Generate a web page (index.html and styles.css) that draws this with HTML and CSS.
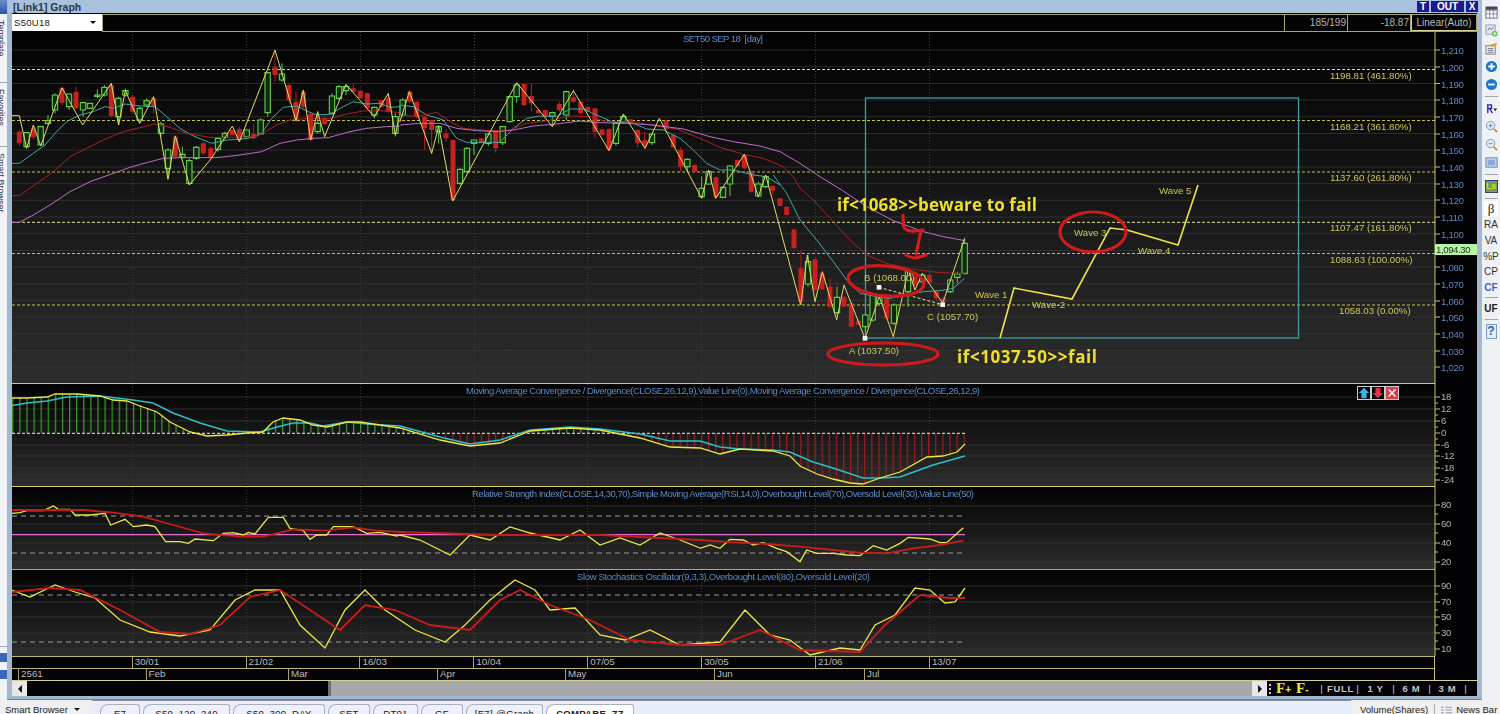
FILE: index.html
```html
<!DOCTYPE html>
<html lang="en">
<head>
<meta charset="utf-8">
<title>[Link1] Graph</title>
<link rel="stylesheet" href="styles.css">
</head>
<body>
<div class="app">
  <div class="desk">
    <aside class="leftbar">
      <div class="lefticon"></div>
      <div class="leftsec leftsec-a"><span class="vtext">Template</span></div>
      <div class="leftsec leftsec-b"><span class="vtext">Favorites</span></div>
      <div class="leftsec leftsec-c"><span class="vtext">Smart Browser</span></div>
      <div class="leftsec leftsec-d"><div class="lefticon small"></div><div class="lefticon small"></div></div>
    </aside>

    <main class="window">
      <header class="titlebar">
        <span class="wintitle">[Link1] Graph</span>
        <div class="winbtns"><span class="winbtn">T</span><span class="winbtn wide">OUT</span><span class="winbtn">X</span></div>
      </header>
      <div class="toolbar">
        <div class="combo"><span>S50U18</span><span class="caret"></span></div>
        <div class="infobox">
          <div class="cell grow"></div>
          <div class="cell num">185/199</div>
          <div class="cell num">-18.87</div>
          <div class="cell scale">Linear(Auto)</div>
        </div>
      </div>

      <svg class="panel main-panel" viewBox="12 32 1465 352" aria-label="Price chart">
        <defs>
          <linearGradient id="bg" x1="0" y1="0" x2="0" y2="1"><stop offset="0" stop-color="#020202"/><stop offset="1" stop-color="#2d2d2d"/></linearGradient>
          <pattern id="gbars" x="19.3" y="0" width="7.1" height="10" patternUnits="userSpaceOnUse"><rect width="1.2" height="10" fill="#3f9a30"/></pattern>
          <pattern id="rbars" x="19.3" y="0" width="7.1" height="10" patternUnits="userSpaceOnUse"><rect width="1.2" height="10" fill="#a01c1c"/></pattern>
        </defs>
        <rect class="plotbg" x="12" y="32" width="1423" height="352" fill="url(#bg)"/>
        <path class="grid" d="M12 50H1435M12 66.7H1435M12 83.4H1435M12 100H1435M12 116.8H1435M12 133.5H1435M12 150H1435M12 167H1435M12 183.7H1435M12 200.3H1435M12 217H1435M12 233.7H1435M12 250.4H1435M12 267H1435M12 283.8H1435M12 300.5H1435M12 317H1435M12 333.9H1435M12 350.5H1435M12 367H1435"/>
        <path class="vgrid" d="M132.7 32V384M246.7 32V384M360.7 32V384M474.5 32V384M587.5 32V384M701.5 32V384M815.5 32V384M929.5 32V384"/>
        <path class="fib pale" d="M12 69.5H1435M12 222.3H1435"/>
        <path class="fib" d="M12 120.5H1435M12 172H1435M12 253.5H1435M12 305H1435"/>
        <rect class="tealbox" x="865.5" y="98" width="433" height="240"/>

        <g transform="translate(0 50) scale(.33333)">
          <path class="wick-g" d="M144 195V225M165 130V190M207 130V180M249 155V200M292 118V145M313 105V140M355 140V225M376 115V140M419 170V220M440 145V170M483 215V260M504 295V385M547 290V325M568 325V405M589 288V330M654 262V305M675 245V268M782 205V255M803 65V200M846 40V95M953 185V250M996 130V195M1017 105V150M1038 105V135M1123 170V205M1186 190V260"/>
          <path class="wick-r" d="M58 240V288M100 225V270M186 113V165M228 110V178M334 100V203M398 135V190M461 140V190M526 255V325M610 275V315M632 290V330M718 232V275M761 222V268M825 0V95M867 100V158M888 125V215M910 120V175M932 190V272M974 200V225M1060 102V128M1102 128V180M1165 130V188"/>
          <path class="up" d="M72 248h16V290h-16zM114 230h16V285h-16zM136 212h16V220h-16zM157 135h16V180h-16zM199 132h16V170h-16zM241 158h16V180h-16zM262 160h16V175h-16zM284 135h16V139h-16zM305 112h16V135h-16zM347 145h16V200h-16zM368 122h16V135h-16zM411 175h16V210h-16zM432 152h16V165h-16zM475 222h16V250h-16zM496 300h16V355h-16zM539 313h16V322h-16zM560 332h16V400h-16zM581 292h16V325h-16zM646 265h16V298h-16zM667 250h16V262h-16zM732 240h16V260h-16zM774 210h16V252h-16zM795 68h16V188h-16zM838 72h16V90h-16zM945 220h16V245h-16zM988 138h16V190h-16zM1009 110h16V145h-16zM1030 110h16V122h-16zM1115 172h16V195h-16zM1178 200h16V250h-16z"/>
          <path class="down" d="M58 245V280M100 235V262M186 115V158M228 125V175M334 105V198M398 140V185M461 145V170M526 260V320M610 280V310M632 295V325M697 240V255M718 238V270M761 252V265M825 52V75M867 105V150M888 155V210M910 125V170M932 192V270M974 205V222M1060 115V125M1081 122V145M1102 130V175M1144 150V170M1165 145V185"/>
          <path class="ma cyan" d="M36 340L58 340 100 310 135 285 165 250 200 215 240 195 280 185 315 170 340 175 375 162 420 168 465 170 500 200 540 235 580 258 635 280 680 270 720 268 760 262 785 250 815 205 850 172 890 168 925 185 950 195 990 193 1030 170 1060 155 1100 162 1140 160 1170 172 1200 170"/>
          <path class="ma red" d="M36 437L58 437 110 400 160 365 210 320 260 295 310 270 370 245 420 233 465 222 510 232 560 250 630 262 700 262 770 260 830 225 870 210 930 205 990 205 1040 192 1090 183 1140 182 1200 188"/>
          <path class="ma purple" d="M36 517L58 517 100 495 150 465 210 425 270 395 340 370 390 352 440 338 490 325 540 323 600 323 660 322 720 315 785 305 840 280 890 270 940 265 985 263 1050 245 1100 235 1160 230 1200 228"/>
          <path class="zig" d="M36 197L58 197 80 295 100 225 122 288 186 113 248 225 334 100 356 225 376 122 419 220 461 140 504 388 526 258 568 405 632 328 697 228 718 275 825 0 888 212 910 120 932 270 953 185 974 260 1038 103 1123 200 1165 130 1186 255 1200 190"/>
        </g>

        <g transform="translate(400 60) scale(.33333)">
          <path class="wick-g" d="M8 115V170M116 195V250M180 325V375M201 262V340M222 238V285M265 218V258M308 198V255M329 108V188M350 70V128M457 155V198M499 92V180M648 188V258M670 165V190M756 220V255M862 295V335M905 350V415M926 330V375M969 380V415M990 315V408M1075 365V412M1097 345V385"/>
          <path class="wick-r" d="M30 92V130M50 125V175M74 168V270M95 180V282M138 208V245M159 238V425M287 210V278M372 72V137M394 72V155M436 150V172M478 125V155M520 88V128M542 120V165M585 145V235M627 205V272M713 208V262M734 215V265M798 178V210M820 222V265M842 262V335M884 312V338M948 350V415M1012 298V320M1033 282V328M1054 332V398M1118 376V405"/>
          <path class="up" d="M0 120h16V165h-16zM108 200h16V215h-16zM172 328h16V370h-16zM193 265h16V335h-16zM214 240h16V250h-16zM257 222h16V250h-16zM300 200h16V248h-16zM321 110h16V185h-16zM342 75h16V110h-16zM449 158h16V168h-16zM491 95h16V165h-16zM640 190h16V250h-16zM662 170h16V185h-16zM748 222h16V248h-16zM854 298h16V320h-16zM897 385h16V410h-16zM918 335h16V372h-16zM961 382h16V412h-16zM982 318h16V372h-16zM1067 372h16V408h-16zM1089 350h16V380h-16z"/>
          <path class="down" d="M30 95V125M50 125V170M74 170V205M95 180V210M138 222V235M159 240V420M244 235V250M287 212V265M372 72V135M394 108V130M415 150V160M436 150V170M478 132V150M520 112V125M542 125V160M563 140V155M585 145V215M606 208V225M627 208V268M692 178V188M713 210V250M734 240V258M798 182V208M820 225V262M842 270V320M884 315V335M948 352V412M1012 300V318M1033 285V325M1054 335V395M1118 378V392"/>
          <path class="ma cyan" d="M0 170L0 135 40 140 80 165 130 180 170 235 200 247 260 247 300 247 340 205 380 175 420 168 470 170 510 147 550 147 590 165 640 187 700 190 740 207 790 210 840 235 880 270 920 310 960 330 1000 330 1060 345 1100 350 1140 375"/>
          <path class="ma red" d="M0 188L0 165 50 170 110 157 150 185 190 205 270 212 330 210 380 190 440 182 520 168 570 170 620 185 700 185 750 195 830 207 900 235 960 262 1030 283 1090 295 1150 320 1180 350 1200 385"/>
          <path class="ma purple" d="M0 195L60 190 120 190 170 205 230 212 290 215 340 210 400 198 470 192 540 183 600 188 680 190 760 195 850 207 930 230 1000 245 1080 258 1140 275 1200 310"/>
          <path class="zig" d="M0 185L28 95 95 280 116 200 158 423 350 68 457 200 520 92 627 272 670 162 735 265 778 175 905 415 926 330 947 415 1033 283 1075 410 1097 345"/>
        </g>

        <g transform="translate(780 190) scale(.33333)">
          <path class="wick-g" d="M84 195V290M171 290V375M256 370V425M278 310V395M298 315V345M342 340V405M384 235V350M427 250V280M511 265V310M532 245V280M554 145V255"/>
          <path class="wick-r" d="M63 180V340M105 205V305M126 248V300M150 265V355M214 335V412M320 315V390M405 255V290M448 250V282M469 300V330M490 320V340"/>
          <path class="up" d="M76 215h16V282h-16zM163 322h16V368h-16zM248 375h16V410h-16zM270 315h16V390h-16zM290 320h16V340h-16zM334 345h16V400h-16zM376 245h16V305h-16zM419 255h16V275h-16zM503 270h16V305h-16zM524 252h16V262h-16zM546 160h16V250h-16z"/>
          <path class="down" d="M0 25V48M20 50V75M42 118V175M63 235V335M105 208V300M126 250V298M150 290V350M192 320V350M214 340V410M235 392V405M320 320V385M362 310V320M405 260V285M448 255V278M469 305V325M490 325V335"/>
          <path class="ma cyan" d="M-20 -45L20 10 60 90 110 150 160 215 200 270 240 310 280 318 330 325 380 315 430 305 480 302 520 295 553 265"/>
          <path class="ma red" d="M60 -6L100 30 150 85 210 150 260 195 320 220 400 238 480 248 555 250"/>
          <path class="ma purple" d="M60 -80L120 -40 185 0 260 50 340 92 430 125 490 140 555 152"/>
          <path class="zig" d="M-43 -45L62 345 82 195 105 335 127 245 170 390 192 285 255 445 298 320 340 440 385 240 405 300 427 250 488 340 554 145"/>
          <path class="abline" d="M297 292L488 344"/>
          <rect class="pt" x="290" y="285" width="14" height="14"/>
          <rect class="pt" x="481" y="337" width="14" height="14"/>
          <rect class="pt" x="248" y="438" width="14" height="14"/>
        </g>

        <path class="wave" d="M1000 338L1014 288 1072 299 1110 228 1127 230 1178 245 1198 185"/>

        <ellipse class="ring" cx="883" cy="354" rx="55" ry="11"/>
        <ellipse class="ring" cx="886" cy="281" rx="38" ry="15" transform="rotate(5 886 281)"/>
        <ellipse class="ring" cx="1093" cy="232" rx="33" ry="20"/>
        <path class="scrawl" d="M903 215V225Q905 232 915 231L923 230M921 231L916 254M906 255Q912 258 916 258L926 255"/>

        <text class="ann" x="837" y="211" textLength="200">if&lt;1068&gt;&gt;beware to fail</text>
        <text class="ann" x="957" y="363" textLength="140">if&lt;1037.50&gt;&gt;fail</text>
        <text class="lbl" x="864" y="281">B (1068.00)</text>
        <text class="lbl" x="927" y="320">C (1057.70)</text>
        <text class="lbl" x="849" y="354">A (1037.50)</text>
        <text class="lbl" x="975" y="298">Wave 1</text>
        <text class="lbl" x="1032" y="308">Wave-2</text>
        <text class="lbl" x="1074" y="236">Wave 3</text>
        <text class="lbl" x="1138" y="254">Wave 4</text>
        <text class="lbl" x="1159" y="194">Wave 5</text>
        <text class="lbl" x="1330" y="79">1198.81 (461.80%)</text>
        <text class="lbl" x="1330" y="130">1168.21 (361.80%)</text>
        <text class="lbl" x="1330" y="181">1137.60 (261.80%)</text>
        <text class="lbl" x="1330" y="231">1107.47 (161.80%)</text>
        <text class="lbl" x="1330" y="263">1088.63 (100.00%)</text>
        <text class="lbl" x="1339" y="314">1058.03 (0.00%)</text>
        <text class="ptitle" x="683" y="42" textLength="80">SET50 SEP 18  [day]</text>

        <rect class="axisbg" x="1435" y="32" width="42" height="352"/>
        <path class="axis" d="M1435 32V384M1435 50H1440M1435 67H1440M1435 83.5H1440M1435 100H1440M1435 117H1440M1435 134H1440M1435 150H1440M1435 167H1440M1435 184H1440M1435 200H1440M1435 217H1440M1435 234H1440M1435 267H1440M1435 284H1440M1435 301H1440M1435 317H1440M1435 334H1440M1435 351H1440M1435 367H1440"/>
        <g class="ylab">
          <text x="1441" y="54">1,210</text><text x="1441" y="71">1,200</text><text x="1441" y="87.5">1,190</text><text x="1441" y="104">1,180</text><text x="1441" y="121">1,170</text><text x="1441" y="138">1,160</text><text x="1441" y="154">1,150</text><text x="1441" y="171">1,140</text><text x="1441" y="188">1,130</text><text x="1441" y="204">1,120</text><text x="1441" y="221">1,110</text><text x="1441" y="238">1,100</text><text x="1441" y="271">1,080</text><text x="1441" y="288">1,070</text><text x="1441" y="305">1,060</text><text x="1441" y="321">1,050</text><text x="1441" y="338">1,040</text><text x="1441" y="355">1,030</text><text x="1441" y="371">1,020</text>
        </g>
        <rect class="pricetag" x="1435" y="244" width="42" height="11"/>
        <text class="pricetxt" x="1436" y="253">1,094.30</text>
        <path class="sep" d="M12 383.500H1435"/>
      </svg>

      <div class="macdwrap">
        <svg class="panel macd-panel" viewBox="12 384 1465 103" aria-label="MACD">
          <rect class="plotbg" x="12" y="384" width="1423" height="103" fill="url(#bg)"/>
          <path class="grid" d="M12 397H1435M12 409H1435M12 421H1435M12 445H1435M12 456H1435M12 468H1435M12 480H1435"/>
          <path class="vgrid" d="M132.7 384V487M246.7 384V487M360.7 384V487M474.5 384V487M587.5 384V487M701.5 384V487M815.5 384V487M929.5 384V487"/>
          <path fill="url(#gbars)" d="M12 433V398L27 398 47 397 55 394 77 394 100 396 127 401 140 405 157 411 170 422 190 431 207 433 260 433 273 422 283 418 300 420 313 425 327 427 347 422 360 422 380 425 400 428 440 433ZM525 433L530 431 570 428 600 430 620 433Z"/>
          <path fill="url(#rbars)" d="M445 433V441L470 446 500 443 525 433ZM620 433L640 438 670 447 700 448 720 454 740 449 773 451 790 455 800 466 817 474 833 479 850 483 863 484 880 478 900 472 927 457 943 456 957 452 965 444V433Z"/>
          <path class="zero" d="M12 433.300H965"/>
          <path class="ind cyan2" d="M12 405.500L27 403 47 401 67 397 100 396 133 400 153 403 173 413 200 423 227 431 260 432 277 427 293 423 310 423 323 426 347 422 367 424 400 426 440 437 470 444 500 440 530 430 570 427 600 429 640 434 670 441 700 441 720 447 740 449 773 450 790 452 813 462 833 468 863 478 880 478 900 477 933 465 965 456"/>
          <path class="ind yel" d="M12 398L27 398 47 397 55 394 77 394 100 396 113 400 127 401 140 406 157 412 170 422 190 432 207 436 227 435 247 433 263 432 273 422 283 418 300 420 313 425 327 427 347 422 360 422 380 425 400 428 440 440 470 446 500 443 530 431 570 428 600 430 640 438 670 447 700 448 720 454 740 449 773 451 790 456 800 466 817 474 833 479 850 483 863 484 880 478 900 472 927 457 943 456 957 452 965 444"/>
          <text class="ptitle" x="466" y="394" textLength="514">Moving Average Convergence / Divergence(CLOSE,26,12,9),Value Line(0),Moving Average Convergence / Divergence(CLOSE,26,12,9)</text>
          <rect class="axisbg" x="1435" y="384" width="42" height="103"/>
          <path class="axis" d="M1435 384V487M1435 397H1440M1435 403H1438M1435 409H1440M1435 415H1438M1435 421H1440M1435 427H1438M1435 433H1440M1435 439H1438M1435 445H1440M1435 451H1438M1435 456H1440M1435 462H1438M1435 468H1440M1435 474H1438M1435 480H1440"/>
          <g class="ylab grey">
            <text x="1441" y="400">18</text><text x="1441" y="412">12</text><text x="1441" y="424">6</text><text x="1441" y="436">0</text><text x="1441" y="448">-6</text><text x="1441" y="459">-12</text><text x="1441" y="471">-18</text><text x="1441" y="483">-24</text>
          </g>
          <path class="sep" d="M12 486.500H1435"/>
        </svg>
        <div class="panelbtns">
          <span class="pbtn"><svg viewBox="0 0 14 14"><path fill="#38b4e8" d="M7 1L13 7H10V13H4V7H1Z"/></svg></span>
          <span class="pbtn"><svg viewBox="0 0 14 14"><path fill="#e0304a" d="M7 13L13 7H10V1H4V7H1Z"/></svg></span>
          <span class="pbtn closebtn"><svg viewBox="0 0 14 14"><path stroke="#fff" stroke-width="1.6" d="M3 3L11 11M11 3L3 11"/></svg></span>
        </div>
      </div>

      <svg class="panel rsi-panel" viewBox="12 487 1465 83" aria-label="RSI">
        <rect class="plotbg" x="12" y="487" width="1423" height="83" fill="url(#bg)"/>
        <path class="grid" d="M12 506H1435M12 524H1435M12 543H1435M12 562H1435"/>
        <path class="vgrid" d="M132.7 487V570M246.7 487V570M360.7 487V570M474.5 487V570M587.5 487V570M701.5 487V570M815.5 487V570M929.5 487V570"/>
        <path class="dash" d="M12 516H965M12 553H965"/>
        <path class="pinkline" d="M12 534.700H965"/>
        <g transform="translate(0 380) scale(.33333)">
          <path class="ind yel" d="M36 400L60 398 80 392 130 392 160 378 175 388 210 388 225 405 270 405 315 400 332 435 375 418 400 440 440 435 465 440 497 485 540 485 565 490 585 477 640 482 670 460 700 458 730 465 745 457 765 462 805 412 850 412 870 445 910 452 930 478 950 465 980 465 1000 440 1060 440 1100 460 1140 457 1190 468 1200 465"/>
          <path class="ind redl" d="M36 390L250 390 340 398 430 410 520 435 610 460 720 470 790 470 880 448 980 452 1060 442 1130 452 1200 456"/>
        </g>
        <path class="ind yel" d="M400 535L420 540 450 555 470 535 490 540 510 527 530 533 560 540 580 530 600 545 620 538 640 545 660 533 680 540 700 548"/>
        <path class="ind redl" d="M400 532L500 535 600 535 700 540"/>
        <g transform="translate(700 380) scale(.33333)">
          <path class="ind yel" d="M0 505L30 495 60 505 90 478 130 480 160 495 190 488 230 505 260 515 300 545 320 510 350 520 400 520 440 525 480 527 520 497 560 510 600 490 625 472 690 477 720 488 740 488 790 443"/>
          <path class="ind redl" d="M0 480L100 487 200 492 300 500 400 510 480 518 560 520 640 505 720 495 790 482"/>
        </g>
        <text class="ptitle" x="472" y="497" textLength="502">Relative Strength Index(CLOSE,14,30,70),Simple Moving Average(RSI,14,0),Overbought Level(70),Oversold Level(30),Value Line(50)</text>
        <rect class="axisbg" x="1435" y="487" width="42" height="83"/>
        <path class="axis" d="M1435 487V570M1435 505H1440M1435 514H1438M1435 524H1440M1435 533H1438M1435 543H1440M1435 552H1438M1435 562H1440"/>
        <g class="ylab grey"><text x="1441" y="527">60</text><text x="1441" y="546">40</text><text x="1441" y="565">20</text><text x="1441" y="508">80</text></g>
        <path class="sep" d="M12 569.700H1435"/>
      </svg>

      <svg class="panel stoch-panel" viewBox="12 570 1465 86" aria-label="Stochastics">
        <rect class="plotbg" x="12" y="570" width="1423" height="86" fill="url(#bg)"/>
        <path class="grid" d="M12 586H1435M12 602H1435M12 617H1435M12 633H1435M12 649H1435"/>
        <path class="vgrid" d="M132.7 570V656M246.7 570V656M360.7 570V656M474.5 570V656M587.5 570V656M701.5 570V656M815.5 570V656M929.5 570V656"/>
        <path class="dash" d="M12 595H965M12 642H965"/>
        <path class="ind yel" d="M12 590L30 597 55 585 75 592 95 598 120 620 150 632 180 636 210 630 235 600 255 590 280 590 300 625 325 648 345 610 365 590 385 610 415 630 445 642 465 625 490 600 515 580 535 590 550 610 575 608 600 635 625 640 650 630 680 645 720 642 745 610 770 635 790 640 810 655 840 648 860 650 875 625 895 615 915 588 930 590 945 603 955 602 965 588"/>
        <path class="ind redl" d="M12 592L50 588 80 590 120 610 160 632 190 634 220 625 250 597 280 590 310 610 340 630 365 605 395 610 430 625 470 630 500 600 520 590 550 605 590 620 630 640 680 645 720 645 760 630 800 650 860 652 885 625 920 595 950 598 965 598"/>
        <text class="ptitle" x="577" y="580" textLength="293">Slow Stochastics Oscillator(9,3,3),Overbought Level(80),Oversold Level(20)</text>
        <rect class="axisbg" x="1435" y="570" width="42" height="86"/>
        <path class="axis" d="M1435 570V656M1435 586H1440M1435 594H1438M1435 602H1440M1435 610H1438M1435 617H1440M1435 625H1438M1435 633H1440M1435 641H1438M1435 649H1440"/>
        <g class="ylab grey"><text x="1441" y="589">90</text><text x="1441" y="605">70</text><text x="1441" y="620">50</text><text x="1441" y="636">30</text><text x="1441" y="652">10</text></g>
      </svg>

      <div class="xrow dates">
        <div class="xcell"></div><div class="xcell">30/01</div><div class="xcell">21/02</div><div class="xcell">16/03</div><div class="xcell">10/04</div><div class="xcell">07/05</div><div class="xcell">30/05</div><div class="xcell">21/06</div><div class="xcell">13/07</div>
      </div>
      <div class="xrow months">
        <div class="xcell"></div><div class="xcell">2561</div><div class="xcell">Feb</div><div class="xcell">Mar</div><div class="xcell">Apr</div><div class="xcell">May</div><div class="xcell">Jun</div><div class="xcell">Jul</div>
      </div>
      <div class="scrollrow">
        <span class="sbtn"><span class="tri-l"></span></span>
        <span class="strack"></span>
        <span class="sthumb"></span>
        <span class="sbtn"><span class="tri-r"></span></span>
        <div class="ranges">
          <span class="grip"></span>
          <span class="fbtn">F<sub>+</sub></span><span class="fbtn">F<sub>-</sub></span>
          <span class="bar">|</span><span class="rng">FULL</span><span class="bar">|</span><span class="rng">1 Y</span><span class="bar">|</span><span class="rng">6 M</span><span class="bar">|</span><span class="rng">3 M</span><span class="bar">|</span>
        </div>
      </div>
    </main>

    <aside class="rightbar">
      <svg class="rb-icon" viewBox="0 0 14 14"><rect x="1" y="1" width="12" height="12" fill="#fff" stroke="#667"/><path stroke="#889" d="M1 5H13M1 8.500H13M5 1V13M9 1V13"/><rect x="1" y="1" width="12" height="3" fill="#445"/></svg>
      <svg class="rb-icon" viewBox="0 0 14 14"><rect x="1" y="1" width="10" height="10" fill="#e4e8ee" stroke="#99a"/><path stroke="#668" fill="none" d="M3 7L5 4 7 6 9 3"/><circle cx="10.500" cy="10.500" r="3" fill="#5cb848"/><path stroke="#fff" d="M10.500 8.500V12.500M8.500 10.500H12.500"/></svg>
      <svg class="rb-icon" viewBox="0 0 14 14"><rect x="1" y="4" width="10" height="9" fill="#e8ecf2" stroke="#778"/><path stroke="#778" d="M3 7H9M3 9H9M3 11H9"/><path fill="#e0a020" d="M5 3L12 1 13 3 7 5Z"/></svg>
      <svg class="rb-icon round" viewBox="0 0 14 14"><circle cx="7" cy="7" r="6" fill="#1c78c8"/><path stroke="#fff" stroke-width="2" d="M3.500 7H10.500M7 3.500V10.500"/></svg>
      <svg class="rb-icon round" viewBox="0 0 14 14"><circle cx="7" cy="7" r="6" fill="#1c78c8"/><path stroke="#fff" stroke-width="2" d="M3.500 7H10.500"/></svg>
      <i class="rb-sep"></i>
      <svg class="rb-icon" viewBox="0 0 14 14"><path fill="none" stroke="#2222b0" stroke-width="1.400" d="M2 3H7V7H3M3 3V12M5 7L8 12"/><path fill="#223" d="M9 7H13L11 10Z"/></svg>
      <svg class="rb-icon" viewBox="0 0 14 14"><circle cx="6" cy="6" r="4.500" fill="#dfeaf5" stroke="#7c97b5"/><path stroke="#6d86a3" stroke-width="1" d="M4 6H8M6 4V8"/><path stroke="#c09050" stroke-width="2" d="M9.500 9.500L13 13"/></svg>
      <svg class="rb-icon" viewBox="0 0 14 14"><circle cx="6" cy="6" r="4.500" fill="#dfeaf5" stroke="#7c97b5"/><path stroke="#6d86a3" stroke-width="1" d="M4 6H8"/><path stroke="#c09050" stroke-width="2" d="M9.500 9.500L13 13"/></svg>
      <svg class="rb-icon" viewBox="0 0 14 14"><rect x="1" y="2" width="12" height="10" fill="#c8daf0" stroke="#5c7cb0"/><rect x="3" y="4" width="8" height="6" fill="#8aa8d8"/></svg>
      <i class="rb-sep"></i>
      <span class="rb-ls">Ls</span>
      <i class="rb-sep"></i>
      <span class="rb-beta">β</span>
      <span class="rb-t">RA</span><span class="rb-t">VA</span><span class="rb-t">%P</span><span class="rb-t">CP</span><span class="rb-t blue">CF</span>
      <i class="rb-sep tight"></i>
      <span class="rb-t bold">UF</span>
      <i class="rb-sep tight"></i>
      <span class="rb-help">?</span>
    </aside>
  </div>

  <footer class="tabsrow">
    <div class="smart"><span>Smart Browser</span><span class="caret"></span></div>
    <div class="tabs">
      <span class="tab t1">E7</span><span class="tab t2">S50_120_240</span><span class="tab t3">S50_300_DAY</span><span class="tab t4">SET</span><span class="tab t5">DT01</span><span class="tab t6">GF</span><span class="tab t7">[E7]-@Graph</span><span class="tab t8 active">COMPARE_ZZ</span>
    </div>
    <div class="status">
      <span class="stat">Volume(Shares)</span>
      <span class="stat news"><svg class="newsicon" viewBox="0 0 12 8"><path stroke="#8a94a4" d="M0 1H3M5 1H12M0 4H3M5 4H12M0 7H3M5 7H12"/></svg>News Bar</span>
    </div>
  </footer>
</div>
</body>
</html>
```
FILE: styles.css
```css
* { box-sizing: border-box; }
html, body { margin: 0; padding: 0; height: 100%; overflow: hidden; background: #f0f0f0; }
body { font-family: "Liberation Sans", Arial, sans-serif; }

.app { width: 1500px; height: 714px; display: flex; flex-direction: column; overflow: hidden; }
.desk { display: flex; height: 700px; flex: none; }

/* left strip */
.leftbar { width: 7px; flex: none; background: #f2f3f6; display: flex; flex-direction: column; overflow: hidden; }
.lefticon { width: 12px; height: 14px; margin-left: -5px; background: linear-gradient(#6c8fd0, #2c52a8); flex: none; }
.lefticon.small { height: 9px; margin-bottom: 8px; background: #3c68b8; }
.leftsec { border-bottom: 1px solid #9aa; overflow: hidden; flex: none; padding-top: 6px; }
.leftsec-a { height: 69px; }
.leftsec-b { height: 64px; }
.leftsec-c { height: 500px; }
.leftsec-d { border: 0; height: 40px; }
.vtext { display: block; writing-mode: vertical-rl; font-size: 9px; color: #335; margin-left: -4px; white-space: nowrap; }

/* window */
.window { width: 1475px; flex: none; background: #a4b8d0; padding: 0 5px 4px 5px; display: flex; flex-direction: column; border-bottom: 1px solid #70808f; }
.titlebar { height: 13px; flex: none; margin-left: -4px; margin-right: -4px; padding: 0 3px 0 5px; display: flex; align-items: center; justify-content: space-between; background: #a9c1dd; }
.wintitle { font-size: 10.5px; font-weight: bold; color: #2b3646; }
.winbtns { display: flex; gap: 2px; }
.winbtn { background: #1b1b8e; color: #fff; font-size: 10px; font-weight: bold; height: 11px; width: 12px; line-height: 11px; text-align: center; }
.winbtn.wide { width: 33px; }

.toolbar { height: 19px; flex: none; display: flex; background: #000; padding-top: 1px; }
.combo { width: 90px; height: 17px; background: #fff; display: flex; align-items: center; justify-content: space-between; padding: 0 6px 0 2px; font-size: 9.5px; color: #222; letter-spacing: .3px; }
.caret { width: 0; height: 0; border: 3px solid transparent; border-top: 3px solid #111; border-bottom: 0; }
.infobox { flex: 1; display: flex; height: 18px; background: #030303; border: 1px solid #a8a474; color: #b4b4b4; font-size: 10px; }
.cell { line-height: 16px; border-right: 1px solid #a8a474; }
.cell.grow { flex: 1; }
.cell.num { width: 63px; text-align: right; padding-right: 1px; }
.cell.scale { width: 65px; text-align: center; border-right: 0; color: #bbb; border-bottom: 1px solid #d8d48c; border-left: 1px solid #d8d48c; }

/* chart panels */
.panel { display: block; width: 1465px; flex: none; filter: blur(.3px); }
.main-panel { height: 352px; }
.macdwrap { position: relative; height: 103px; flex: none; }
.macd-panel { height: 103px; }
.rsi-panel { height: 83px; }
.stoch-panel { height: 86px; }
.axisbg { fill: #020205; }
.grid { stroke: #3a3a3a; stroke-width: 1; fill: none; opacity: .7; }
.vgrid { stroke: #3d3d3d; stroke-width: 1; stroke-dasharray: 1 2; fill: none; }
.fib { stroke: #c6c24a; stroke-width: 1; stroke-dasharray: 3 2; fill: none; }
.fib.pale { stroke: #e6e49a; }
.tealbox { fill: none; stroke: #3f9f9f; stroke-width: 1.3; }
.wick-g { stroke: #5ccc3c; stroke-width: 1; fill: none; vector-effect: non-scaling-stroke; }
.wick-r { stroke: #b81e1e; stroke-width: 1; fill: none; vector-effect: non-scaling-stroke; }
.up { stroke: #62d044; stroke-width: 1.1px; fill: #0f2a0d; vector-effect: non-scaling-stroke; }
.down { stroke: #c82020; stroke-width: 5px; fill: none; vector-effect: non-scaling-stroke; }
.ma { fill: none; stroke-width: 1px; vector-effect: non-scaling-stroke; }
.ma.cyan { stroke: #3fa8a8; }
.ma.red { stroke: #a82020; }
.ma.purple { stroke: #b872c0; }
.zig { fill: none; stroke: #dcdc68; stroke-width: 1px; vector-effect: non-scaling-stroke; }
.abline { fill: none; stroke: #e8e48c; stroke-width: 1px; stroke-dasharray: 3 2; vector-effect: non-scaling-stroke; }
.pt { fill: #f4f4f4; }
.wave { fill: none; stroke: #ece44c; stroke-width: 1.6; }
.ring { fill: none; stroke: #d01a1a; stroke-width: 3.2; }
.scrawl { fill: none; stroke: #dd1a1a; stroke-width: 3; stroke-linecap: round; stroke-linejoin: round; }
.ann { font: bold 17px "Open Sans", "Liberation Sans", sans-serif; fill: #efdf2c; }
.lbl { font: 9.7px "Liberation Sans", sans-serif; fill: #c8c858; }
.ptitle { font: 9.5px "Liberation Sans", sans-serif; fill: #5a8cc6; white-space: pre; }
.axis { stroke: #c8c26c; stroke-width: 1; fill: none; }
.ylab { font: 9.6px "Liberation Sans", sans-serif; fill: #6086b8; letter-spacing: -.3px; }
.ylab.grey { fill: #b0b0b0; }
.pricetag { fill: #b8f2a4; }
.pricetxt { font: 9.6px "Liberation Sans", sans-serif; fill: #16301a; letter-spacing: -.4px; }
.sep { stroke: #d2cc6c; stroke-width: 1; fill: none; }
.zero { stroke: #f2f2f2; stroke-width: 1; stroke-dasharray: 3 2; fill: none; }
.ind { fill: none; stroke-width: 1.3px; vector-effect: non-scaling-stroke; }
.ind.yel { stroke: #ece844; }
.ind.cyan2 { stroke: #2cc0c8; stroke-width: 1.5px; }
.ind.redl { stroke: #c81c1c; stroke-width: 1.8px; }
.dash { stroke: #9c9c9c; stroke-width: 1; stroke-dasharray: 5 4; fill: none; }
.pinkline { stroke: #e070d4; stroke-width: 1.3; fill: none; }

.panelbtns { position: absolute; left: 1345px; top: 2px; display: flex; gap: 0; }
.pbtn { width: 14px; height: 14px; background: #0a0a0a; border: 1px solid #c8ccd0; display: block; }
.pbtn svg { display: block; width: 12px; height: 12px; }
.closebtn { background: #d84048; }

/* time rows */
.xrow { height: 12px; flex: none; display: grid; background: #030308; border-top: 1px solid #bdb86c; width: 1423px; color: #bcbcbc; font-size: 9.8px; line-height: 10px; box-shadow: 42px 0 0 #030306; }
.xcell { border-right: 1px solid #a8a464; padding-left: 2px; overflow: hidden; white-space: nowrap; }
.xcell:last-child { border-right: 1px solid #c8c26c; }
.dates { grid-template-columns: 120.7px repeat(7, 113.9px) 1fr; }
.months { grid-template-columns: 7px 127.5px 142.5px 149px 128px 149px 150px 1fr; }

.scrollrow { height: 16px; flex: none; display: flex; background: #030306; border-top: 1px solid #d4d09a; }
.sbtn { width: 15px; flex: none; background: #e8e8e8; display: flex; align-items: center; justify-content: center; }
.tri-l { border: 4px solid transparent; border-right: 4px solid #111; border-left: 0; }
.tri-r { border: 4px solid transparent; border-left: 4px solid #111; border-right: 0; }
.strack { width: 301px; flex: none; background: #030306; }
.sthumb { width: 924px; flex: none; background: #a8a8a8; border-left: 3px solid #707070; }
.ranges { flex: 1; display: flex; align-items: center; color: #c4c4c4; font-size: 9.5px; font-weight: bold; }
.grip { width: 2px; height: 10px; margin: 0 5px 0 2px; border-left: 2px dotted #ccc; }
.fbtn { font: bold 15px "Liberation Serif", serif; color: #f0e838; width: 20px; line-height: 15px; }
.fbtn sub { font: bold 10px "Liberation Sans", sans-serif; vertical-align: baseline; }
.bar { font-weight: normal; color: #ccc; width: 11px; text-align: center; }
.rng { text-align: center; letter-spacing: .7px; width: 25px; }

/* right toolbar */
.rightbar { width: 18px; flex: none; background: #eff1f5; display: flex; flex-direction: column; align-items: center; padding-top: 6px; }
.rb-icon { width: 13px; height: 13px; flex: none; margin-bottom: 5px; }
.rb-sep { display: block; width: 13px; height: 1px; background: #a4a8ac; flex: none; margin-bottom: 5px; }
.rb-sep.tight { margin-bottom: 3px; }
.rb-ls { width: 13px; height: 13px; background: #6b9a7e; border: 1px solid #345; color: #d8e000; font: bold 8.5px/11px "Liberation Sans", sans-serif; text-align: center; flex: none; margin-bottom: 5px; }
.rb-beta { font: 13px/15px "Liberation Serif", serif; color: #222; background: #fff; width: 14px; text-align: center; flex: none; margin: -3px 0 1px; }
.rb-t { font-size: 10px; line-height: 15.8px; color: #333; flex: none; }
.rb-t.blue { color: #3a66c8; font-weight: bold; margin-bottom: 1px; }
.rb-t.bold { font-weight: bold; color: #222; margin-bottom: 2px; }
.rb-help { width: 11px; height: 15px; border: 1px solid #7c9ccc; background: #e2ecfa; color: #2462c4; font: bold 12px/13px "Liberation Sans", sans-serif; text-align: center; flex: none; margin-top: 1px; }

/* bottom */
.tabsrow { height: 14px; flex: none; display: flex; background: #f0f0f0; }
.smart { width: 92px; flex: none; display: flex; align-items: flex-start; padding: 4px 0 0 5px; font-size: 9.5px; color: #222; gap: 6px; }
.smart .caret { margin-top: 4px; }
.tabs { width: 1259px; flex: none; display: flex; background: #e9ecfa; padding: 3px 0 0 8px; gap: 3px; border-top: 1px solid #8a94a4; align-items: flex-start; }
.tab { height: 12px; font-size: 9.5px; line-height: 11px; padding-top: 3px; text-align: center; color: #222; background: #eef1fb; border: 1px solid #a8b0c4; border-bottom: 0; border-radius: 8px 3px 0 0; white-space: nowrap; flex: none; overflow: hidden; letter-spacing: .3px; }
.t1 { width: 40px; } .t2 { width: 87px; } .t3 { width: 92px; } .t4 { width: 42px; } .t5 { width: 45px; } .t6 { width: 42px; } .t7 { width: 77px; } .t8 { width: 88px; }
.tab.active { background: #fff; font-weight: bold; }
.status { flex: 1; display: flex; font-size: 9.5px; color: #222; padding: 4px 0 0 9px; gap: 6px; white-space: nowrap; }
.stat.news { border-left: 1px solid #aaa; padding-left: 6px; display: flex; align-items: flex-start; gap: 4px; }
.newsicon { width: 11px; height: 8px; flex: none; margin-top: 2px; }
```
